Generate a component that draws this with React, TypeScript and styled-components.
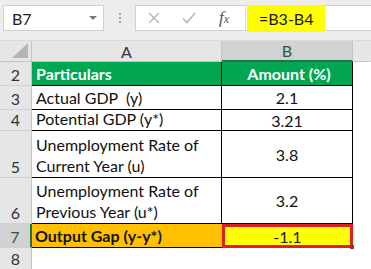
import styled, { createGlobalStyle } from 'styled-components'

const GlobalStyle = createGlobalStyle`
  html, body {
    margin: 0;
    padding: 0;
    background: #ffffff;
  }

  body {
    font-family: Lato, "Open Sans", sans-serif;
    overflow: hidden;
  }
`

interface Row {
  num: number
  label: string[]
  value: string
}

const rows: Row[] = [
  { num: 3, label: ['Actual GDP  (y)'], value: '2.1' },
  { num: 4, label: ['Potential GDP (y*)'], value: '3.21' },
  { num: 5, label: ['Unemployment Rate of', 'Current Year (u)'], value: '3.8' },
  { num: 6, label: ['Unemployment Rate of', 'Previous Year (u*)'], value: '3.2' }
]

export default function App () {
  return (
    <Wrapper>
      <GlobalStyle />
      <FormulaBar>
        <NameBox>
          <span>B7</span>
          <Caret />
        </NameBox>
        <Grip>
          <i /><i /><i />
        </Grip>
        <FormulaBox>
          <Tools>
            <svg width="12" height="12" viewBox="0 0 12 12">
              <path d="M1 1 L11 11 M11 1 L1 11" stroke="#b5b5b5" strokeWidth="1.4" fill="none" />
            </svg>
            <svg width="14" height="12" viewBox="0 0 14 12">
              <path d="M1 6.5 L5 10.5 L13 1" stroke="#b5b5b5" strokeWidth="1.6" fill="none" />
            </svg>
            <Fx>f<sub>x</sub></Fx>
          </Tools>
          <Formula>=B3-B4</Formula>
        </FormulaBox>
      </FormulaBar>

      <Sheet>
        <Corner>
          <svg width="16" height="15" viewBox="0 0 16 15">
            <polygon points="16,0 16,15 0,15" fill="#b4b4b4" />
          </svg>
        </Corner>
        <ColHead>A</ColHead>
        <ColHead $active>B</ColHead>
        <ColHead $blank />

        <RowHead>2</RowHead>
        <TitleCell>Particulars</TitleCell>
        <TitleCell $center>Amount (%)</TitleCell>
        <Empty />

        {rows.map(row => (
          <SheetRow key={row.num}>
            <RowHead>{row.num}</RowHead>
            <LabelCell>
              {row.label.map(line => <div key={line}>{line}</div>)}
            </LabelCell>
            <ValueCell>{row.value}</ValueCell>
            <Empty />
          </SheetRow>
        ))}

        <RowHead $active>7</RowHead>
        <ResultLabel>Output Gap (y-y*)</ResultLabel>
        <ResultValue>
          -1.1
          <Handle />
        </ResultValue>
        <Empty />

        <RowHead>8</RowHead>
        <Empty />
        <Empty />
        <Empty />
      </Sheet>
    </Wrapper>
  )
}

const Wrapper = styled.div`
  width: 371px;
  height: 269px;
  overflow: hidden;
  background: #ffffff;
`

const FormulaBar = styled.div`
  display: flex;
  align-items: flex-start;
  height: 41px;
  padding: 5px 0 0 3px;
  box-sizing: border-box;
  background: #ededed;
  border-bottom: 1px solid #dadada;
`

const NameBox = styled.div`
  display: flex;
  align-items: center;
  justify-content: space-between;
  width: 101px;
  height: 26px;
  box-sizing: border-box;
  padding: 0 6px 0 8px;
  background: #ffffff;
  border: 1px solid #d0d0d0;
  font-size: 16px;
  color: #222222;
`

const Caret = styled.span`
  width: 0;
  height: 0;
  border-left: 4px solid transparent;
  border-right: 4px solid transparent;
  border-top: 4px solid #7a7a7a;
`

const Grip = styled.div`
  display: flex;
  flex-direction: column;
  gap: 2px;
  width: 31px;
  align-items: center;
  padding-top: 8px;

  i {
    display: block;
    width: 2px;
    height: 2px;
    background: #a8a8a8;
  }
`

const FormulaBox = styled.div`
  flex: 1;
  display: flex;
  height: 26px;
  background: #ffffff;
  border: 1px solid #d0d0d0;
  border-right: none;
  box-sizing: border-box;
`

const Tools = styled.div`
  display: flex;
  align-items: center;
  width: 110px;
  padding-left: 12px;
  gap: 22px;
  box-sizing: border-box;
  border-right: 1px solid #dcdcdc;
`

const Fx = styled.span`
  font-family: "Liberation Serif", serif;
  font-style: italic;
  font-size: 17px;
  color: #555555;
  margin-left: 1px;

  sub {
    font-size: 12px;
    vertical-align: 0;
  }
`

const Formula = styled.div`
  display: flex;
  align-items: center;
  width: 78px;
  margin: -1px 0 0 1px;
  height: 27px;
  padding-left: 12px;
  box-sizing: border-box;
  background: #ffff00;
  font-size: 16px;
  color: #1a1a1a;
`

const Sheet = styled.div`
  display: grid;
  grid-template-columns: 32px 190px 131px 18px;
  grid-template-rows: 21px 24px 24px 21px 47px 46px 24px 22px;
`

const SheetRow = styled.div`
  display: contents;
`

const Corner = styled.div`
  background: #e6e6e6;
  border-right: 1px solid #c4c4c4;
  border-bottom: 1px solid #c4c4c4;
  display: flex;
  align-items: flex-end;
  justify-content: flex-end;
  padding: 0 3px 3px 0;
  box-sizing: border-box;
`

const ColHead = styled.div<{ $active?: boolean, $blank?: boolean }>`
  display: flex;
  align-items: center;
  justify-content: center;
  box-sizing: border-box;
  font-size: 16px;
  color: ${p => p.$active ? '#2b5a3c' : '#333333'};
  background: ${p => p.$active ? '#d2d2d2' : '#e6e6e6'};
  border-right: 1px solid ${p => p.$blank ? 'transparent' : '#c4c4c4'};
  border-bottom: ${p => p.$active ? '2px solid #217346' : '1px solid #c4c4c4'};
`

const RowHead = styled.div<{ $active?: boolean }>`
  display: flex;
  align-items: flex-end;
  justify-content: center;
  padding-bottom: 1px;
  box-sizing: border-box;
  font-size: 16px;
  color: ${p => p.$active ? '#2b5a3c' : '#333333'};
  background: ${p => p.$active ? '#d2d2d2' : '#e6e6e6'};
  border-right: ${p => p.$active ? '2px solid #217346' : '1px solid #c4c4c4'};
  border-bottom: 1px solid #d0d0d0;
`

const TitleCell = styled.div<{ $center?: boolean }>`
  display: flex;
  align-items: center;
  justify-content: ${p => p.$center ? 'center' : 'flex-start'};
  padding-left: 4px;
  box-sizing: border-box;
  background: #00a651;
  color: #ffffff;
  font-weight: 700;
  font-size: 16px;
  border-right: 1px solid #000000;
  border-bottom: 1px solid #000000;
`

const LabelCell = styled.div`
  display: flex;
  flex-direction: column;
  justify-content: flex-end;
  padding: 0 0 1px 4px;
  box-sizing: border-box;
  font-size: 16px;
  line-height: 21px;
  white-space: pre;
  color: #111111;
  border-right: 1px solid #000000;
  border-bottom: 1px solid #000000;
`

const ValueCell = styled.div`
  display: flex;
  align-items: center;
  justify-content: center;
  font-size: 16px;
  color: #111111;
  border-right: 1px solid #000000;
  border-bottom: 1px solid #000000;
`

const ResultLabel = styled.div`
  display: flex;
  align-items: center;
  padding-left: 3px;
  box-sizing: border-box;
  background: #ffc000;
  font-weight: 700;
  font-size: 16px;
  color: #111111;
  border-bottom: 1px solid #000000;
`

const ResultValue = styled.div`
  position: relative;
  display: flex;
  align-items: center;
  justify-content: center;
  box-sizing: border-box;
  background: #ffff00;
  border: 3px solid #e41e1e;
  font-size: 16px;
  color: #1a1a1a;
`

const Handle = styled.span`
  position: absolute;
  right: -4px;
  bottom: -4px;
  width: 4px;
  height: 4px;
  background: #8a3a2a;
`

const Empty = styled.div`
  background: #ffffff;
`
